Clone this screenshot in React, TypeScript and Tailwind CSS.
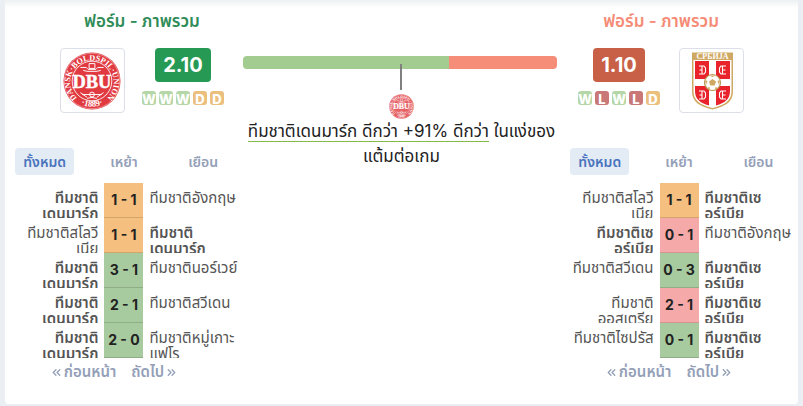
import React, { useState } from 'react';
import { ChevronsLeft, ChevronsRight } from 'lucide-react';

type Result = 'W' | 'D' | 'L';

type Match = {
  home: string;
  away: string;
  score: string;
  result: Result;
  side: 'home' | 'away';
};

const denmarkMatches: Match[] = [
  { home: 'ทีมชาติ\nเดนมาร์ก', away: 'ทีมชาติอังกฤษ', score: '1 - 1', result: 'D', side: 'home' },
  { home: 'ทีมชาติสโลวี\nเนีย', away: 'ทีมชาติ\nเดนมาร์ก', score: '1 - 1', result: 'D', side: 'away' },
  { home: 'ทีมชาติ\nเดนมาร์ก', away: 'ทีมชาตินอร์เวย์', score: '3 - 1', result: 'W', side: 'home' },
  { home: 'ทีมชาติ\nเดนมาร์ก', away: 'ทีมชาติสวีเดน', score: '2 - 1', result: 'W', side: 'home' },
  { home: 'ทีมชาติ\nเดนมาร์ก', away: 'ทีมชาติหมู่เกาะ\nแฟโร', score: '2 - 0', result: 'W', side: 'home' },
];

const serbiaMatches: Match[] = [
  { home: 'ทีมชาติสโลวี\nเนีย', away: 'ทีมชาติเซ\nอร์เบีย', score: '1 - 1', result: 'D', side: 'away' },
  { home: 'ทีมชาติเซ\nอร์เบีย', away: 'ทีมชาติอังกฤษ', score: '0 - 1', result: 'L', side: 'home' },
  { home: 'ทีมชาติสวีเดน', away: 'ทีมชาติเซ\nอร์เบีย', score: '0 - 3', result: 'W', side: 'away' },
  { home: 'ทีมชาติ\nออสเตรีย', away: 'ทีมชาติเซ\nอร์เบีย', score: '2 - 1', result: 'L', side: 'away' },
  { home: 'ทีมชาติไซปรัส', away: 'ทีมชาติเซ\nอร์เบีย', score: '0 - 1', result: 'W', side: 'away' },
];

const chipColors = {
  W: 'bg-[#b5d6a7]',
  D: 'bg-[#ebbf7d]',
  L: 'bg-[#c97777]',
};

const scoreColors = {
  W: 'bg-[#a7cb9f] border-[#8fae88]',
  D: 'bg-[#f5c07f] border-[#d3a56d]',
  L: 'bg-[#f5aaa9] border-[#d29392]',
};

const tabs = ['ทั้งหมด', 'เหย้า', 'เยือน'];

export default function App() {
  return (
    <div className="min-h-screen bg-[#ebeff3] px-[5px] pb-[3px] font-['Inter','Noto_Sans_Thai','Noto_Sans',sans-serif] text-[#222]">
      <main className="rounded-b bg-white bg-linear-to-b from-[#edf1f1] to-white to-[8px] pb-[22px]">
        <div className="grid grid-cols-[3fr_4fr_3fr]">
          <section className="pt-[11px]">
            <div className="flex flex-col items-center pl-9">
              <h2 className="text-[17px] leading-5 font-semibold text-[#2f8c58]">ฟอร์ม - ภาพรวม</h2>
              <div className="mt-[17px] flex gap-[17px]">
                <CrestBox>
                  <DenmarkCrest className="size-[58px]" />
                </CrestBox>
                <Rating value="2.10" form="WWWDD" color="bg-[#269a54]" />
              </div>
            </div>
            <FormTable matches={denmarkMatches} />
          </section>

          <Comparison />

          <section className="pt-[11px]">
            <div className="flex flex-col items-center pr-9">
              <h2 className="text-[17px] leading-5 font-semibold text-[#f58b76]">ฟอร์ม - ภาพรวม</h2>
              <div className="mt-[17px] flex gap-[19px]">
                <Rating value="1.10" form="WLWLD" color="bg-[#c85f47]" />
                <CrestBox>
                  <SerbiaCrest className="size-[58px]" />
                </CrestBox>
              </div>
            </div>
            <FormTable matches={serbiaMatches} />
          </section>
        </div>
      </main>
    </div>
  );
}

const CrestBox = ({ children }: { children: React.ReactNode }) => (
  <div className="flex size-[65px] items-center justify-center rounded border border-[#dcdfe8] bg-white">{children}</div>
);

const Rating = ({ value, form, color }: { value: string; form: string; color: string }) => (
  <div className="flex flex-col items-center">
    <div className={`rounded px-2 py-[3px] text-xl leading-7 font-bold text-white ${color}`}>{value}</div>
    <div className="mt-[9px] flex gap-[3px]">
      {form.split('').map((r, i) => (
        <span
          key={i}
          className={`flex size-[14px] justify-center rounded-[3px] text-[13px] leading-4 font-extrabold text-white ${chipColors[r as Result]}`}
        >
          {r}
        </span>
      ))}
    </div>
  </div>
);

const Comparison = () => (
  <section className="pt-14 pr-[3px]">
    <div className="relative flex h-[13px]">
      <div className="rounded-l bg-[#a3cc91]" style={{ width: '65.6%' }} />
      <div className="flex-1 rounded-r bg-[#f58d78]" />
      <div className="absolute top-2 left-1/2 h-[26px] w-[2px] bg-[#808080]" />
    </div>
    <div className="flex flex-col items-center pt-[25px] pl-[3px]">
      <DenmarkCrest className="size-[25px] opacity-80" />
      <p className="text-center text-[17px] leading-[25px] whitespace-nowrap">
        <span className="border-b border-[#86b949]">ทีมชาติเดนมาร์ก ดีกว่า +91% ดีกว่า</span> ในแง่ของ
        <br />
        แต้มต่อเกม
      </p>
    </div>
  </section>
);

const FormTable = ({ matches }: { matches: Match[] }) => {
  const [active, setActive] = useState(0);

  return (
    <div className="mt-[35px]">
      <div className="grid grid-cols-3 justify-items-center">
        {tabs.map((tab, i) => (
          <button
            key={tab}
            onClick={() => setActive(i)}
            className={`h-[27px] rounded px-2 text-sm leading-5 font-semibold ${
              i === active ? 'bg-[#e3ebf5] text-[#4a74bd]' : 'text-[#94a0b8]'
            }`}
          >
            {tab}
          </button>
        ))}
      </div>
      <table className="mt-2 w-full table-fixed border-collapse text-[15px] leading-4 text-[#555]">
        <tbody>
          {matches.map((match, i) => (
            <tr key={i}>
              <TeamCell name={match.home} bold={match.side === 'home'} right />
              <td className="w-[39px] p-0">
                <div
                  className={`flex h-[35px] items-center justify-center border-b text-sm font-bold whitespace-nowrap text-[#222] ${scoreColors[match.result]}`}
                >
                  {match.score}
                </div>
              </td>
              <TeamCell name={match.away} bold={match.side === 'away'} />
            </tr>
          ))}
        </tbody>
      </table>
      <div className="mt-1 flex justify-center gap-[15px] pr-5 text-[15px] leading-5 font-semibold text-[#94a0b8]">
        <button className="flex items-center gap-px">
          <ChevronsLeft size={13} strokeWidth={2.5} />
          ก่อนหน้า
        </button>
        <button className="flex items-center gap-px">
          ถัดไป
          <ChevronsRight size={13} strokeWidth={2.5} />
        </button>
      </div>
    </div>
  );
};

const TeamCell = ({ name, bold, right }: { name: string; bold: boolean; right?: boolean }) => (
  <td className="p-0 align-top">
    <div
      className={`flex h-[35px] overflow-hidden px-[6px] pt-[7px] whitespace-pre ${bold ? 'font-semibold' : ''} ${
        right ? 'justify-end text-right' : 'text-left'
      }`}
    >
      {name}
    </div>
  </td>
);

const DenmarkCrest = ({ className }: { className: string }) => (
  <svg viewBox="0 0 60 60" className={className} aria-label="DBU">
    <defs>
      <path id="ring-top" d="M13 46 A22.5 22.5 0 1 1 47 46" />
      <path id="ring-bottom" d="M10 48 A27.5 27.5 0 0 0 50 48" />
    </defs>
    <circle cx="30" cy="30" r="29.5" fill="#e03a40" />
    <circle cx="30" cy="30" r="28.7" fill="none" stroke="#fff" strokeWidth="0.4" />
    <circle cx="30" cy="30" r="20.5" fill="none" stroke="#fff" strokeWidth="0.9" />
    <g fill="#fff" fontFamily="Liberation Serif, serif" fontWeight="bold">
      <text textAnchor="middle" fontSize="8.5">
        <textPath href="#ring-top" startOffset="50%">
          DANSK·BOLDSPIL·UNION
        </textPath>
      </text>
      <text textAnchor="middle" fontSize="9">
        <textPath href="#ring-bottom" startOffset="50%">
          ·1889·
        </textPath>
      </text>
    </g>
    <g fill="none" stroke="#fff" strokeWidth="1">
      <path d="M18 16h6l2 2h8l2-2h6M21 19l4 1h10l4-1M27 12h6v5h-6zM20 44h20M18 42l7 5M42 42l-7 5M25 48l5-1 5 1" />
      <circle cx="30" cy="44" r="2.5" />
    </g>
    <text
      x="30"
      y="37"
      textAnchor="middle"
      fill="#fff"
      stroke="#fff"
      strokeWidth="0.5"
      fontFamily="Liberation Sans Narrow, Liberation Serif, serif"
      fontWeight="bold"
      fontSize="19"
    >
      DBU
    </text>
  </svg>
);

const SerbiaCrest = ({ className }: { className: string }) => (
  <svg viewBox="0 0 58 58" className={className} aria-label="СРБИЈА">
    <path d="M9 0.5h41v39c0 10-7 15-20.5 18C16 54.5 9 49.5 9 39.5z" fill="#cfa964" />
    <path d="M10.5 8h38v31c0 9-6 14-19 17-13-3-19-8-19-17z" fill="#fff" />
    <path d="M12 9h14v18H12zM33 9h14v18H33zM12 34h14v19.5C17 51 12 47 12 39zM33 34h14v5c0 8-5 12-14 14.5z" fill="#e8232b" />
    <g fill="none" stroke="#fff" strokeWidth="1.1">
      <path d="M16 14h5l1.5 2v4l-1.500 2h-5M16.500 18h3M19 14v8M43 14h-5l-1.500 2v4l1.500 2h5M42.500 18h-3M39.500 14v8" />
      <path d="M16 39h5l1.500 2v4l-1.500 2h-5M16.500 43h3M19 39v8M43 39h-5l-1.500 2v4l1.500 2h5M42.500 43h-3M39.500 39v8" />
    </g>
    <circle cx="29.5" cy="30.5" r="8" fill="#fff" stroke="#b99450" strokeWidth="1.2" />
    <path
      d="M29.500 27l3.500 2.500-1.300 4h-4.400l-1.300-4zM26 23.500l3.500 1.500 3.500-1.500zM22 28l2.500 1-1.500 4zM37 28l-2.500 1 1.500 4zM24 36l2.500-1 .5 3zM35 36l-2.500-1-.5 3z"
      fill="#cfa964"
    />
    <text x="29.5" y="6.5" textAnchor="middle" fill="#fff" fontFamily="Liberation Serif, serif" fontWeight="bold" fontSize="8">
      СРБИЈА
    </text>
  </svg>
);
